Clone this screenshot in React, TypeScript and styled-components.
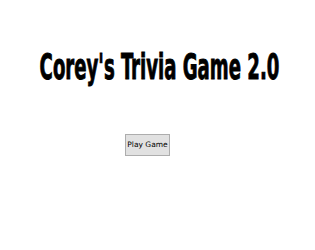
import styled, { createGlobalStyle } from "styled-components";

const GlobalStyle = createGlobalStyle`
  html, body {
    margin: 0;
    padding: 0;
    background: #ffffff;
  }
`;

const Page = styled.div`
  width: 315px;
  height: 250px;
  display: flex;
  flex-direction: column;
  align-items: center;
  padding-top: 47px;
  box-sizing: border-box;
  overflow: hidden;
`;

// Impact isn't installed, so squeeze a bold condensed face into the same shape
const Title = styled.h1`
  margin: 0 0 0 4px;
  font-family: Impact, "DejaVu Sans Condensed", "DejaVu Sans", sans-serif;
  font-weight: 700;
  font-size: 35px;
  line-height: 40px;
  white-space: nowrap;
  color: #000000;
  -webkit-text-stroke: 0.9px #000000;
  transform: scaleX(0.575);
  transform-origin: center;
`;

const ButtonRow = styled.div`
  margin-top: 46px;
  padding-right: 20px;
`;

const PlayButton = styled.button`
  font-family: Tahoma, "DejaVu Sans", Verdana, sans-serif;
  font-size: 7.5px;
  color: #000000;
  background: #e1e1e1;
  border: 1px solid #adadad;
  height: 22px;
  width: 45px;
  padding: 0;
  cursor: pointer;
`;

function App() {
  return (
    <>
      <GlobalStyle />
      <Page>
        <Title>Corey's Trivia Game 2.0</Title>
        <ButtonRow>
          <PlayButton>Play Game</PlayButton>
        </ButtonRow>
      </Page>
    </>
  );
}

export default App;
